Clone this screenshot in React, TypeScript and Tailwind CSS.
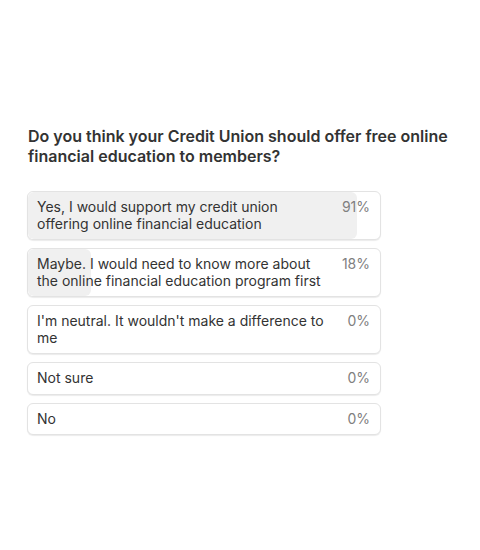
import React from "react";

const options = [
  { label: "Yes, I would support my credit union offering online financial education", pct: "91%", fill: 93.5 },
  { label: "Maybe. I would need to know more about the online financial education program first", pct: "18%", fill: 18 },
  { label: "I'm neutral. It wouldn't make a difference to me", pct: "0%", fill: 0 },
  { label: "Not sure", pct: "0%", fill: 0 },
  { label: "No", pct: "0%", fill: 0 },
];

export default function App() {
  return (
    <div className="w-[480px] h-[550px] bg-white" style={{ fontFamily: "Inter, 'Liberation Sans', sans-serif" }}>
      <div className="pt-[126px] pl-[27px] pr-[20px]">
        <h1 className="text-[16px] leading-[20px] font-semibold text-[#333333] pl-[1px]">
          Do you think your Credit Union should offer free online financial education to members?
        </h1>
        <div className="h-[25px]" />
        <div className="w-[354px] flex flex-col gap-[8px]">
          {options.map((o, i) => (
            <div
              key={i}
              className="relative rounded-[6px] border border-[#e3e3e3] bg-white shadow-[0_1px_1px_rgba(0,0,0,0.08)] overflow-hidden"
            >
              {o.fill > 0 && (
                <div className="absolute left-0 top-0 bottom-0 bg-[#f0f0f0] rounded-[6px]" style={{ width: `${o.fill}%` }} />
              )}
              <div className="relative flex items-start justify-between gap-[16px] pl-[9px] pr-[10px] py-[7px] text-[14px] leading-[16.5px]">
                <span className="text-[#333333]">{o.label}</span>
                <span className="text-[#808080] shrink-0">{o.pct}</span>
              </div>
            </div>
          ))}
        </div>
      </div>
    </div>
  );
}
